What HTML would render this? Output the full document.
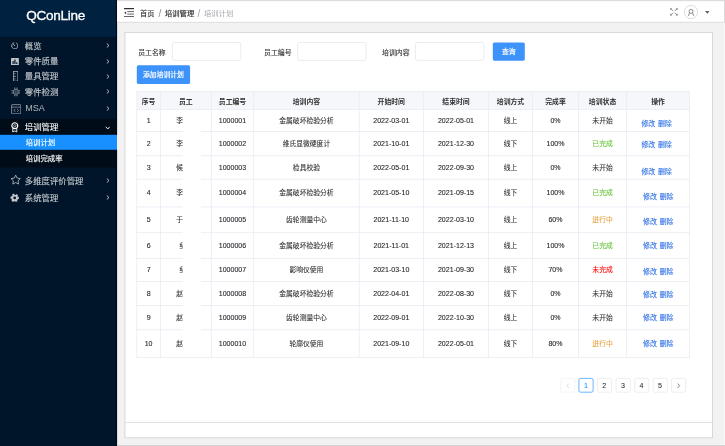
<!DOCTYPE html>
<html lang="zh-CN">
<head>
<meta charset="utf-8">
<title>QConLine - 培训计划</title>
<style>
*{box-sizing:border-box;margin:0;padding:0}
html,body{width:725px;height:446px;overflow:hidden;background:#f2f2f2;font-family:"Liberation Sans","Noto Sans CJK SC",sans-serif;}
body{position:relative}
.root{position:absolute;left:0;top:0;width:725px;height:446px;will-change:transform}
.bg{position:absolute;left:0;top:0;width:725px;height:446px}
.abs,.side,.logo,.mi,.sub,.hdr,.card,.foot,.th,.td,.vl,.hl,.lk,.inp,.lbl,.btn,.pg,.mask{position:absolute}
.side{left:0;top:0;width:117px;height:446px}
.logo{left:0;top:0;width:117px;height:36.6px;color:#fff;font-size:13.6px;line-height:31.5px;text-align:center;-webkit-text-stroke:.32px #fff;padding-right:5.7px;letter-spacing:-.3px}
.mi{left:0;width:117px;height:15px;color:rgba(255,255,255,.74);-webkit-text-stroke:.1px currentColor;font-size:8.4px;line-height:15px;white-space:nowrap}
.mi .t{position:absolute;left:24.8px;top:.7px}
.mi svg.ic{position:absolute;left:10.5px;top:3px;width:9px;height:9px}
.mi svg.ar{position:absolute;left:105.5px;top:5px;width:4px;height:5px}
.sub{display:none}
.sel{display:none}
.si{position:absolute;left:25.7px;color:#fff;-webkit-text-stroke:.15px #fff;font-size:7.4px;line-height:15px;height:15px;white-space:nowrap}
.hdr{left:117px;top:1.3px;width:607px;height:21px}
.bc{position:absolute;top:0;line-height:26.4px;font-size:7.2px;color:#303133;white-space:nowrap}
.lbl{font-size:6.9px;color:#303133;-webkit-text-stroke:.12px #303133;line-height:18px;top:43.6px;white-space:nowrap}
.inp{display:none}
.btn{color:#fff;font-size:6.8px;-webkit-text-stroke:.2px #fff;text-align:center;border-radius:1.6px;white-space:nowrap}
.th{top:91.6px;height:18px;line-height:19.4px;color:#303133;font-weight:bold;font-size:6.85px;text-align:center;white-space:nowrap}
.td{height:12px;line-height:12px;font-size:6.8px;color:#303133;-webkit-text-stroke:.08px currentColor;text-align:center;white-space:nowrap}
.td.n{font-size:7.05px;color:#26282c;transform:scaleY(1.09);-webkit-text-stroke:.1px #26282c}
.vl{display:none}
.hl{display:none}
.lk{height:12px;line-height:12px;font-size:6.9px;color:#2b6de5;-webkit-text-stroke:.1px currentColor;white-space:nowrap}
.lk .d{margin-left:2.9px}
.mask{left:182.9px;top:110.4px;width:18.1px;height:245.6px;background:#fff}
.pg{top:378.1px;width:14.6px;height:14.4px;font-size:7.1px;line-height:17.2px;text-align:center;color:#2a2a2a;-webkit-text-stroke:.05px currentColor}
.pg.on{color:#1890ff}

</style>
</head>
<body>
<svg class="bg" viewBox="0 0 725 446"><rect x="0.00" y="0.00" width="116.60" height="446.00" fill="#001529"/><rect x="0.00" y="0.00" width="116.60" height="36.70" fill="#002140"/><rect x="0.00" y="119.00" width="116.60" height="48.40" fill="#000c17"/><rect x="0.00" y="134.80" width="117.00" height="15.00" fill="#1890ff"/><rect x="115.90" y="0.00" width="1.20" height="134.80" fill="#000a1c"/><rect x="115.90" y="149.80" width="1.20" height="300.00" fill="#000a1c"/><rect x="117.10" y="0.00" width="608.00" height="1.30" fill="#dcdcdc"/><rect x="724.10" y="22.50" width="0.90" height="424.00" fill="#f9f9f9"/><rect x="117.10" y="445.10" width="608.00" height="0.90" fill="#d2d2d2"/><rect x="117.10" y="1.30" width="607.00" height="20.70" fill="#fff"/><rect x="117.10" y="21.85" width="607.00" height="0.70" fill="#d4d4d4"/><rect x="724.10" y="0.00" width="0.90" height="22.50" fill="#d9d9d9"/><rect x="124.95" y="32.35" width="587.5" height="405.5" fill="#fff" stroke="#cdcdcd" stroke-width=".75"/><rect x="124.95" y="422.10" width="587.50" height="0.75" fill="#d8d8d8"/><rect x="172.40" y="42.5" width="68.4" height="17.9" rx="1.8" fill="#fff" stroke="#dfe2e9" stroke-width=".65"/><rect x="297.70" y="42.5" width="68.4" height="17.9" rx="1.8" fill="#fff" stroke="#dfe2e9" stroke-width=".65"/><rect x="415.50" y="42.5" width="68.4" height="17.9" rx="1.8" fill="#fff" stroke="#dfe2e9" stroke-width=".65"/><rect x="492.8" y="42.4" width="32" height="18.3" rx="1.6" fill="#3d93fa"/><rect x="136.8" y="65.3" width="53.3" height="18.6" rx="1.6" fill="#3d93fa"/><rect x="136.80" y="91.50" width="552.70" height="18.00" fill="#f5f7fa"/><rect x="136.40" y="91.10" width="0.80" height="266.80" fill="#e9ecf3"/><rect x="160.00" y="91.10" width="0.80" height="266.80" fill="#e9ecf3"/><rect x="210.90" y="91.10" width="0.80" height="266.80" fill="#e9ecf3"/><rect x="253.30" y="91.10" width="0.80" height="266.80" fill="#e9ecf3"/><rect x="358.80" y="91.10" width="0.80" height="266.80" fill="#e9ecf3"/><rect x="423.00" y="91.10" width="0.80" height="266.80" fill="#e9ecf3"/><rect x="488.20" y="91.10" width="0.80" height="266.80" fill="#e9ecf3"/><rect x="532.00" y="91.10" width="0.80" height="266.80" fill="#e9ecf3"/><rect x="578.20" y="91.10" width="0.80" height="266.80" fill="#e9ecf3"/><rect x="626.10" y="91.10" width="0.80" height="266.80" fill="#e9ecf3"/><rect x="689.10" y="91.10" width="0.80" height="266.80" fill="#e9ecf3"/><rect x="136.40" y="91.10" width="553.50" height="0.80" fill="#e9ecf3"/><rect x="136.40" y="109.10" width="553.50" height="0.80" fill="#e9ecf3"/><rect x="136.40" y="131.00" width="553.50" height="0.80" fill="#e9ecf3"/><rect x="136.40" y="155.30" width="553.50" height="0.80" fill="#e9ecf3"/><rect x="136.40" y="178.90" width="553.50" height="0.80" fill="#e9ecf3"/><rect x="136.40" y="206.50" width="553.50" height="0.80" fill="#e9ecf3"/><rect x="136.40" y="232.30" width="553.50" height="0.80" fill="#e9ecf3"/><rect x="136.40" y="257.90" width="553.50" height="0.80" fill="#e9ecf3"/><rect x="136.40" y="281.10" width="553.50" height="0.80" fill="#e9ecf3"/><rect x="136.40" y="305.20" width="553.50" height="0.80" fill="#e9ecf3"/><rect x="136.40" y="329.40" width="553.50" height="0.80" fill="#e9ecf3"/><rect x="136.40" y="357.10" width="553.50" height="0.80" fill="#e9ecf3"/><rect x="182.90" y="110.30" width="18.10" height="245.60" fill="#fff"/><rect x="560.70" y="378.4" width="14.2" height="13.8" rx="1.6" fill="#fff" stroke="#eeeeee" stroke-width=".6"/><rect x="578.90" y="378.4" width="14.2" height="13.8" rx="1.6" fill="#fff" stroke="#1890ff" stroke-width=".65"/><rect x="597.40" y="378.4" width="14.2" height="13.8" rx="1.6" fill="#fff" stroke="#e2e2e2" stroke-width=".6"/><rect x="616.10" y="378.4" width="14.2" height="13.8" rx="1.6" fill="#fff" stroke="#e2e2e2" stroke-width=".6"/><rect x="634.70" y="378.4" width="14.2" height="13.8" rx="1.6" fill="#fff" stroke="#e2e2e2" stroke-width=".6"/><rect x="653.10" y="378.4" width="14.2" height="13.8" rx="1.6" fill="#fff" stroke="#e2e2e2" stroke-width=".6"/><rect x="671.50" y="378.4" width="14.2" height="13.8" rx="1.6" fill="#fff" stroke="#e2e2e2" stroke-width=".6"/></svg>
<div class="root">
<div class="side">
  <div class="logo">QConLine</div>
  <div class="sub"></div>
  <div class="sel"></div>

  <div class="mi" style="top:38.3px">
    <svg class="ic" style="left:10.8px;top:3.6px;width:7.6px;height:7.6px" viewBox="0 0 16 16"><circle cx="8" cy="8" r="6.6" fill="none" stroke="#bcc1c8" stroke-width="1.6" stroke-dasharray="36.5 5" transform="rotate(-66 8 8)"/><path d="M4.800 4.200L8.300 8.600" fill="none" stroke="#bcc1c8" stroke-width="1.700"/></svg>
    <span class="t">概览</span>
    <svg class="ar" viewBox="0 0 8 10"><path d="M1.5 1l4.5 4-4.5 4" fill="none" stroke="#c5c9ce" stroke-width="1.8"/></svg>
  </div>
  <div class="mi" style="top:53.7px">
    <svg class="ic" style="left:10.9px;top:3.9px;width:7.9px;height:7.6px" viewBox="0 0 16 15.400"><rect x="0" y="0" width="16" height="15.400" rx="1.200" fill="#bfc4cb"/><path d="M4.300 12V6M8 12V2.800M11.700 12V8.500" stroke="#001529" stroke-width="2.400"/></svg>
    <span class="t">零件质量</span>
    <svg class="ar" viewBox="0 0 8 10"><path d="M1.5 1l4.5 4-4.5 4" fill="none" stroke="#c5c9ce" stroke-width="1.8"/></svg>
  </div>
  <div class="mi" style="top:68.6px">
    <svg class="ic" style="left:12.8px;top:2.300px;width:5.300px;height:10.600px" viewBox="0 0 10 20"><rect x=".9" y=".9" width="8.200" height="18.200" fill="none" stroke="#a4abb5" stroke-width="1.500"/><path d="M1 5h3.500M1 10h4.500M1 15h3.500" stroke="#a4abb5" stroke-width="1.500"/></svg>
    <span class="t">量具管理</span>
    <svg class="ar" viewBox="0 0 8 10"><path d="M1.5 1l4.5 4-4.5 4" fill="none" stroke="#c5c9ce" stroke-width="1.8"/></svg>
  </div>
  <div class="mi" style="top:83.9px">
    <svg class="ic" style="left:10.700px;top:2.900px;width:9.800px;height:9.800px" viewBox="0 0 18 18"><rect x="5" y="5" width="8" height="8" rx="1.500" fill="none" stroke="#a4abb5" stroke-width="1.700"/><circle cx="9" cy="9" r="1.300" fill="#a4abb5"/><path d="M7 1v2.500M11 1v2.500M7 14.500v2.500M11 14.500v2.500M1 7h2.500M1 11h2.500M14.500 7h2.500M14.500 11h2.500" stroke="#a4abb5" stroke-width="1.600"/></svg>
    <span class="t">零件检测</span>
    <svg class="ar" viewBox="0 0 8 10"><path d="M1.5 1l4.500 4-4.500 4" fill="none" stroke="#c5c9ce" stroke-width="1.8"/></svg>
  </div>
  <div class="mi" style="top:101.1px">
    <svg class="ic" style="left:10.8px;top:2.700px;width:10.400px;height:10.400px" viewBox="0 0 20 20"><rect x="1.200" y="1.200" width="17.600" height="17.600" rx=".8" fill="none" stroke="#a4abb5" stroke-width="1.400"/><path d="M1.200 6h17.600" stroke="#a4abb5" stroke-width="1.300"/><path d="M8 9.500l-2.200 2.800 2.200 2.800M12 9.500l2.200 2.800-2.200 2.800" fill="none" stroke="#a4abb5" stroke-width="1.400"/></svg>
    <span class="t" style="font-size:9px;left:25.200px;top:.3px;color:rgba(255,255,255,.66);-webkit-text-stroke:0">MSA</span>
    <svg class="ar" viewBox="0 0 8 10"><path d="M1.500 1l4.500 4-4.500 4" fill="none" stroke="#c5c9ce" stroke-width="1.800"/></svg>
  </div>
  <div class="mi" style="top:119.900px;color:#fff">
    <svg class="ic" style="left:11.400px;top:2.200px;width:7.600px;height:10.600px" viewBox="0 0 15.200 21.200"><circle cx="7.600" cy="7.400" r="5.900" fill="none" stroke="#fff" stroke-width="2.400"/><circle cx="7.600" cy="7.400" r="2.300" fill="none" stroke="#fff" stroke-width="1.200"/><path d="M3.600 12.500V20l4-2.200 4 2.200V12.500" fill="none" stroke="#fff" stroke-width="1.800"/></svg>
    <span class="t" style="top:.2px">培训管理</span>
    <svg class="ar" style="left:104.500px;top:6px;width:5.500px;height:4px" viewBox="0 0 10 8"><path d="M1 1.500l4 4.500 4-4.500" fill="none" stroke="#fff" stroke-width="1.800"/></svg>
  </div>
  <div class="si" style="top:135px">培训计划</div>
  <div class="si" style="top:150.500px">培训完成率</div>
  <div class="mi" style="top:173.200px">
    <svg class="ic" style="left:9.900px;top:1.200px;width:11.400px;height:11.400px" viewBox="0 0 20 20"><path d="M10 2l2.500 5.200 5.700.8-4.100 4 1 5.700L10 15l-5.100 2.700 1-5.700-4.100-4 5.700-.8z" fill="none" stroke="#b4bac2" stroke-width="1.500" stroke-linejoin="round"/></svg>
    <span class="t">多维度评价管理</span>
    <svg class="ar" viewBox="0 0 8 10"><path d="M1.500 1l4.500 4-4.500 4" fill="none" stroke="#c5c9ce" stroke-width="1.800"/></svg>
  </div>
  <div class="mi" style="top:190.300px">
    <svg class="ic" style="left:10.200px;top:2.500px;width:9.400px;height:9.800px" viewBox="0 0 20 20"><circle cx="10" cy="10" r="7.300" fill="none" stroke="#c5c9ce" stroke-width="3.400" stroke-dasharray="4.200 3.445" transform="rotate(-16 10 10)"/><circle cx="10" cy="10" r="4.900" fill="none" stroke="#c5c9ce" stroke-width="4"/></svg>
    <span class="t">系统管理</span>
    <svg class="ar" viewBox="0 0 8 10"><path d="M1.500 1l4.500 4-4.500 4" fill="none" stroke="#c5c9ce" stroke-width="1.800"/></svg>
  </div>
</div>

<div class="hdr">
  <svg class="abs" style="left:6.900px;top:6.600px;width:10px;height:9.500px" viewBox="0 0 20 19"><path d="M0 1.200h20M0 17.800h20" stroke="#303133" stroke-width="2.300"/><path d="M6.500 7.200h13.500M6.500 12.200h13.500" stroke="#303133" stroke-width="1.500"/><path d="M4.200 6.800L.6 9.700l3.600 2.900z" fill="#303133"/></svg>
  <span class="bc" style="left:23px;-webkit-text-stroke:.15px #303133">首页</span>
  <span class="bc" style="left:41.400px;color:#8a8f99;font-size:10px;line-height:25.800px">/</span>
  <span class="bc" style="left:48px;font-size:7.300px;-webkit-text-stroke:.18px #303133">培训管理</span>
  <span class="bc" style="left:80.600px;color:#a0a5ad;font-size:10px;line-height:25.800px">/</span>
  <span class="bc" style="left:86.900px;font-size:7.350px;color:#a2a6ad">培训计划</span>
  <svg class="abs" style="left:552.700px;top:7.200px;width:7.900px;height:7.700px" viewBox="0 0 16 16"><path d="M1.200 1.200l5 5M14.800 1.200l-5 5M1.200 14.800l5-5M14.800 14.800l-5-5" stroke="#6b6e74" stroke-width="1.700"/><path d="M.8 4V.8H4M12 .8h3.200V4M.8 12v3.200H4M15.200 12v3.200H12" fill="none" stroke="#6b6e74" stroke-width="1.200"/></svg>
  <svg class="abs" style="left:566.900px;top:3.600px;width:14.100px;height:14.100px" viewBox="0 0 28 28"><circle cx="14" cy="14" r="13.300" fill="#fff" stroke="#b8b8b8" stroke-width="1"/><circle cx="14" cy="12.600" r="3.900" fill="none" stroke="#63666b" stroke-width="1.500"/><path d="M8.600 21.600L10.900 16M19.400 21.600L17.100 16" fill="none" stroke="#63666b" stroke-width="1.500"/></svg>
  <svg class="abs" style="left:587.600px;top:9.500px;width:4.600px;height:2.800px" viewBox="0 0 10 6"><path d="M0 0h10L5 6z" fill="#606266"/></svg>
</div>


<span class="lbl" style="left:138.200px">员工名称</span>
<div class="inp" style="left:172.100px"></div>
<span class="lbl" style="left:264px">员工编号</span>
<div class="inp" style="left:297.400px"></div>
<span class="lbl" style="left:382px">培训内容</span>
<div class="inp" style="left:415.200px"></div>
<div class="btn" style="left:492.800px;top:42.400px;width:32px;height:18.300px;line-height:19.700px">查询</div>
<div class="btn" style="left:136.800px;top:65.300px;width:53.300px;height:18.600px;line-height:20.200px">添加培训计划</div>

<div class="th" style="left:136.8px;width:23.6px">序号</div>
<div class="th" style="left:160.4px;width:50.9px">员工</div>
<div class="th" style="left:211.3px;width:42.4px">员工编号</div>
<div class="th" style="left:253.7px;width:105.5px">培训内容</div>
<div class="th" style="left:359.2px;width:64.2px">开始时间</div>
<div class="th" style="left:423.4px;width:65.2px">结束时间</div>
<div class="th" style="left:488.6px;width:43.8px">培训方式</div>
<div class="th" style="left:532.4px;width:46.2px">完成率</div>
<div class="th" style="left:578.6px;width:47.9px">培训状态</div>
<div class="th" style="left:626.5px;width:63.0px">操作</div>
<div class="td n" style="left:136.8px;width:23.6px;top:114.5px">1</div>
<div class="td" style="left:160.9px;width:50.9px;top:114.5px">李明华</div>
<div class="td n" style="left:211.3px;width:42.4px;top:114.5px">1000001</div>
<div class="td" style="left:253.7px;width:105.5px;top:114.5px">金属破坏检验分析</div>
<div class="td n" style="left:359.2px;width:64.2px;top:114.5px">2022-03-01</div>
<div class="td n" style="left:423.4px;width:65.2px;top:114.5px">2022-05-01</div>
<div class="td" style="left:488.6px;width:43.8px;top:114.5px">线上</div>
<div class="td n" style="left:532.4px;width:46.2px;top:114.5px">0%</div>
<div class="td" style="left:578.6px;width:47.9px;top:114.5px;color:#303133">未开始</div>
<div class="lk" style="left:641.4px;top:117.6px"><span>修改</span><span class="d">删除</span></div>
<div class="td n" style="left:136.8px;width:23.6px;top:137.6px">2</div>
<div class="td" style="left:160.9px;width:50.9px;top:137.6px">李晓东</div>
<div class="td n" style="left:211.3px;width:42.4px;top:137.6px">1000002</div>
<div class="td" style="left:253.7px;width:105.5px;top:137.6px">维氏显微硬度计</div>
<div class="td n" style="left:359.2px;width:64.2px;top:137.6px">2021-10-01</div>
<div class="td n" style="left:423.4px;width:65.2px;top:137.6px">2021-12-30</div>
<div class="td" style="left:488.6px;width:43.8px;top:137.6px">线下</div>
<div class="td n" style="left:532.4px;width:46.2px;top:137.6px">100%</div>
<div class="td" style="left:578.6px;width:47.9px;top:137.6px;color:#67c23a">已完成</div>
<div class="lk" style="left:641.4px;top:138.6px"><span>修改</span><span class="d">删除</span></div>
<div class="td n" style="left:136.8px;width:23.6px;top:161.5px">3</div>
<div class="td" style="left:160.9px;width:50.9px;top:161.5px">候建国</div>
<div class="td n" style="left:211.3px;width:42.4px;top:161.5px">1000003</div>
<div class="td" style="left:253.7px;width:105.5px;top:161.5px">检具校验</div>
<div class="td n" style="left:359.2px;width:64.2px;top:161.5px">2022-05-01</div>
<div class="td n" style="left:423.4px;width:65.2px;top:161.5px">2022-09-30</div>
<div class="td" style="left:488.6px;width:43.8px;top:161.5px">线上</div>
<div class="td n" style="left:532.4px;width:46.2px;top:161.5px">0%</div>
<div class="td" style="left:578.6px;width:47.9px;top:161.5px;color:#303133">未开始</div>
<div class="lk" style="left:641.4px;top:165.8px"><span>修改</span><span class="d">删除</span></div>
<div class="td n" style="left:136.8px;width:23.6px;top:187.1px">4</div>
<div class="td" style="left:160.9px;width:50.9px;top:187.1px">李志强</div>
<div class="td n" style="left:211.3px;width:42.4px;top:187.1px">1000004</div>
<div class="td" style="left:253.7px;width:105.5px;top:187.1px">金属破坏检验分析</div>
<div class="td n" style="left:359.2px;width:64.2px;top:187.1px">2021-05-10</div>
<div class="td n" style="left:423.4px;width:65.2px;top:187.1px">2021-09-15</div>
<div class="td" style="left:488.6px;width:43.8px;top:187.1px">线下</div>
<div class="td n" style="left:532.4px;width:46.2px;top:187.1px">100%</div>
<div class="td" style="left:578.6px;width:47.9px;top:187.1px;color:#67c23a">已完成</div>
<div class="lk" style="left:643.0px;top:190.6px"><span>修改</span><span class="d">删除</span></div>
<div class="td n" style="left:136.8px;width:23.6px;top:213.8px">5</div>
<div class="td" style="left:160.9px;width:50.9px;top:213.8px">于海洋</div>
<div class="td n" style="left:211.3px;width:42.4px;top:213.8px">1000005</div>
<div class="td" style="left:253.7px;width:105.5px;top:213.8px">齿轮测量中心</div>
<div class="td n" style="left:359.2px;width:64.2px;top:213.8px">2021-11-10</div>
<div class="td n" style="left:423.4px;width:65.2px;top:213.8px">2022-03-10</div>
<div class="td" style="left:488.6px;width:43.8px;top:213.8px">线上</div>
<div class="td n" style="left:532.4px;width:46.2px;top:213.8px">60%</div>
<div class="td" style="left:578.6px;width:47.9px;top:213.8px;color:#e6a23c">进行中</div>
<div class="lk" style="left:643.0px;top:215.6px"><span>修改</span><span class="d">删除</span></div>
<div class="td n" style="left:136.8px;width:23.6px;top:239.5px">6</div>
<div class="td" style="left:160.9px;width:50.9px;top:239.5px">纪丽</div>
<div class="td n" style="left:211.3px;width:42.4px;top:239.5px">1000006</div>
<div class="td" style="left:253.7px;width:105.5px;top:239.5px">金属破坏检验分析</div>
<div class="td n" style="left:359.2px;width:64.2px;top:239.5px">2021-11-01</div>
<div class="td n" style="left:423.4px;width:65.2px;top:239.5px">2021-12-13</div>
<div class="td" style="left:488.6px;width:43.8px;top:239.5px">线上</div>
<div class="td n" style="left:532.4px;width:46.2px;top:239.5px">100%</div>
<div class="td" style="left:578.6px;width:47.9px;top:239.5px;color:#67c23a">已完成</div>
<div class="lk" style="left:643.0px;top:239.8px"><span>修改</span><span class="d">删除</span></div>
<div class="td n" style="left:136.8px;width:23.6px;top:263.9px">7</div>
<div class="td" style="left:160.9px;width:50.9px;top:263.9px">纪伟</div>
<div class="td n" style="left:211.3px;width:42.4px;top:263.9px">1000007</div>
<div class="td" style="left:253.7px;width:105.5px;top:263.9px">影响仪使用</div>
<div class="td n" style="left:359.2px;width:64.2px;top:263.9px">2021-03-10</div>
<div class="td n" style="left:423.4px;width:65.2px;top:263.9px">2021-09-30</div>
<div class="td" style="left:488.6px;width:43.8px;top:263.9px">线下</div>
<div class="td n" style="left:532.4px;width:46.2px;top:263.9px">70%</div>
<div class="td" style="left:578.6px;width:47.9px;top:263.9px;color:#ff0000">未完成</div>
<div class="lk" style="left:643.0px;top:265.6px"><span>修改</span><span class="d">删除</span></div>
<div class="td n" style="left:136.8px;width:23.6px;top:287.6px">8</div>
<div class="td" style="left:160.9px;width:50.9px;top:287.6px">赵立新</div>
<div class="td n" style="left:211.3px;width:42.4px;top:287.6px">1000008</div>
<div class="td" style="left:253.7px;width:105.5px;top:287.6px">金属破坏检验分析</div>
<div class="td n" style="left:359.2px;width:64.2px;top:287.6px">2022-04-01</div>
<div class="td n" style="left:423.4px;width:65.2px;top:287.6px">2022-08-30</div>
<div class="td" style="left:488.6px;width:43.8px;top:287.6px">线下</div>
<div class="td n" style="left:532.4px;width:46.2px;top:287.6px">0%</div>
<div class="td" style="left:578.6px;width:47.9px;top:287.6px;color:#303133">未开始</div>
<div class="lk" style="left:643.0px;top:288.8px"><span>修改</span><span class="d">删除</span></div>
<div class="td n" style="left:136.8px;width:23.6px;top:311.7px">9</div>
<div class="td" style="left:160.9px;width:50.9px;top:311.7px">赵永刚</div>
<div class="td n" style="left:211.3px;width:42.4px;top:311.7px">1000009</div>
<div class="td" style="left:253.7px;width:105.5px;top:311.7px">齿轮测量中心</div>
<div class="td n" style="left:359.2px;width:64.2px;top:311.7px">2022-09-01</div>
<div class="td n" style="left:423.4px;width:65.2px;top:311.7px">2022-10-30</div>
<div class="td" style="left:488.6px;width:43.8px;top:311.7px">线上</div>
<div class="td n" style="left:532.4px;width:46.2px;top:311.7px">0%</div>
<div class="td" style="left:578.6px;width:47.9px;top:311.7px;color:#303133">未开始</div>
<div class="lk" style="left:643.0px;top:311.8px"><span>修改</span><span class="d">删除</span></div>
<div class="td n" style="left:136.8px;width:23.6px;top:337.6px">10</div>
<div class="td" style="left:160.9px;width:50.9px;top:337.6px">赵文静</div>
<div class="td n" style="left:211.3px;width:42.4px;top:337.6px">1000010</div>
<div class="td" style="left:253.7px;width:105.5px;top:337.6px">轮廓仪使用</div>
<div class="td n" style="left:359.2px;width:64.2px;top:337.6px">2021-09-10</div>
<div class="td n" style="left:423.4px;width:65.2px;top:337.6px">2022-05-01</div>
<div class="td" style="left:488.6px;width:43.8px;top:337.6px">线下</div>
<div class="td n" style="left:532.4px;width:46.2px;top:337.6px">80%</div>
<div class="td" style="left:578.6px;width:47.9px;top:337.6px;color:#e6a23c">进行中</div>
<div class="lk" style="left:643.0px;top:337.7px"><span>修改</span><span class="d">删除</span></div>
<svg class="bg" viewBox="0 0 725 446"><rect x="182.9" y="110.3" width="18.1" height="245.6" fill="#fff"/></svg>

<div class="pg dis" style="left:560.400px"><svg style="position:absolute;left:5.200px;top:4.900px;width:3.500px;height:5.500px" viewBox="0 0 7 11"><path d="M6 1L1.500 5.500 6 10" fill="none" stroke="#c8c8c8" stroke-width="1.400"/></svg></div>
<div class="pg on" style="left:578.600px">1</div>
<div class="pg" style="left:597px">2</div>
<div class="pg" style="left:615.700px">3</div>
<div class="pg" style="left:634.300px">4</div>
<div class="pg" style="left:652.700px">5</div>
<div class="pg" style="left:671.200px"><svg style="position:absolute;left:5.900px;top:4.900px;width:3.500px;height:5.500px" viewBox="0 0 7 11"><path d="M1 1l4.500 4.500L1 10" fill="none" stroke="#555" stroke-width="1.400"/></svg></div>
</div>
</body>
</html>
